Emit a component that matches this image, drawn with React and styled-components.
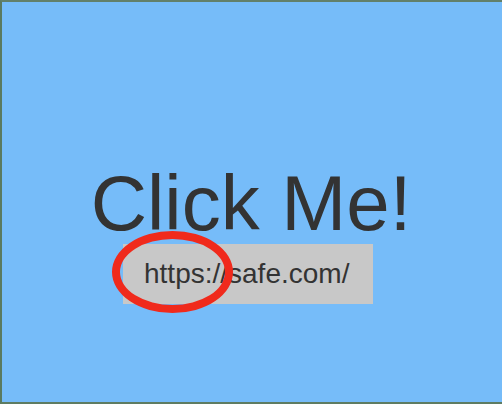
import React from "react";
import styled, { createGlobalStyle } from "styled-components";

const GlobalStyle = createGlobalStyle`
  html, body {
    margin: 0;
    padding: 0;
    background: #76bcf9;
  }
`;

const Frame = styled.div`
  box-sizing: border-box;
  width: 502px;
  height: 404px;
  border-top: 2px solid #62806a;
  border-left: 2px solid #5a7a60;
  border-bottom: 2px solid #5e7c62;
  background-color: #76bcf9;
  display: flex;
  flex-direction: column;
  align-items: center;
  padding-top: 162px;
  font-family: "Liberation Sans", Arial, sans-serif;
  color: #333333;
`;

const Title = styled.div`
  font-size: 78px;
  line-height: 78px;
  margin-right: 2px;
`;

const UrlBox = styled.div`
  position: relative;
  box-sizing: border-box;
  width: 250px;
  height: 60px;
  margin-top: 2px;
  margin-right: 8px;
  padding-left: 21px;
  background-color: #c8c8c8;
  font-size: 28px;
  line-height: 60px;
`;

const Ring = styled.div`
  position: absolute;
  left: -11px;
  top: -13px;
  width: 121px;
  height: 82px;
  box-sizing: border-box;
  border: 8px solid #f02a1c;
  border-radius: 50%;
`;

function App() {
  return (
    <>
      <GlobalStyle />
      <Frame>
        <Title>Click Me!</Title>
        <UrlBox>
          https://safe.com/
          <Ring />
        </UrlBox>
      </Frame>
    </>
  );
}

export default App;
